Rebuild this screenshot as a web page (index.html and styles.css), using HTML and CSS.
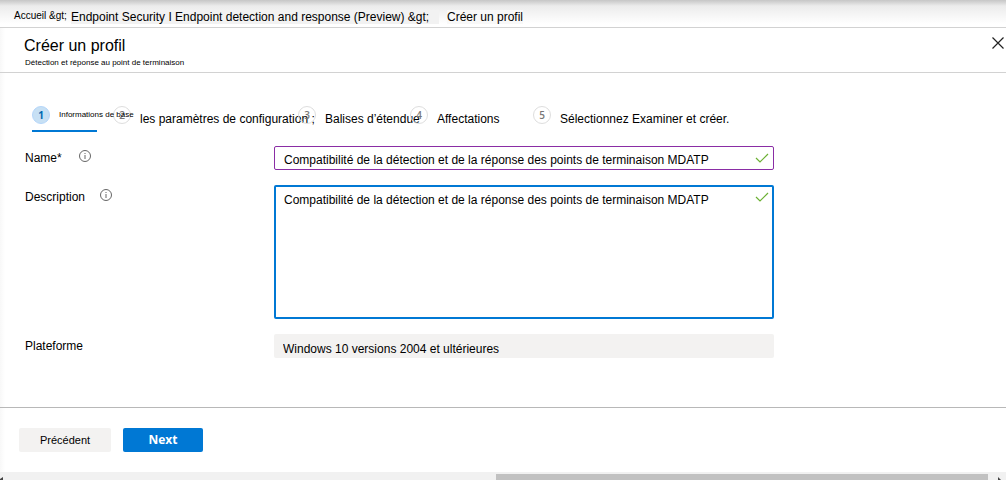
FILE: index.html
```html
<!DOCTYPE html>
<html lang="fr">
<head>
<meta charset="utf-8">
<title>Créer un profil</title>
<link rel="stylesheet" href="styles.css">
</head>
<body>
<div class="page">
  <nav class="breadcrumb" aria-label="Fil d'Ariane">
    <a class="crumb crumb-home" href="#">Accueil &amp;gt;</a>
    <a class="crumb crumb-section" href="#">Endpoint Security I Endpoint detection and response (Preview) &amp;gt;</a>
    <span class="crumb crumb-current">Créer un profil</span>
  </nav>
  <header class="blade-header">
    <div>
      <h1 class="title">Créer un profil</h1>
      <p class="subtitle">Détection et réponse au point de terminaison</p>
    </div>
    <button class="close" type="button" aria-label="Fermer">
      <svg width="12" height="12" viewBox="0 0 12 12"><path d="M.5.5l11 11M11.5.5l-11 11" stroke="#222" stroke-width="1.2" fill="none"/></svg>
    </button>
  </header>
  <main class="content">
    <ol class="steps">
      <li class="step step-basics"><span class="badge badge-active">1</span><span class="step-label label-small">Informations de base</span></li>
      <li class="step step-settings"><span class="badge">2</span><span class="step-label">les paramètres de configuration ;</span></li>
      <li class="step step-tags"><span class="badge">3</span><span class="step-label">Balises d’étendue</span></li>
      <li class="step step-assign"><span class="badge">4</span><span class="step-label">Affectations</span></li>
      <li class="step"><span class="badge">5</span><span class="step-label">Sélectionnez Examiner et créer.</span></li>
    </ol>
    <form class="form" id="profile">
      <div class="label-cell label-name">
        <label for="name">Name*</label>
        <svg class="info" width="12" height="12" viewBox="0 0 12 12"><circle cx="6" cy="6" r="5.5" fill="none" stroke="#666"/><path d="M6 5v4M6 3v1" stroke="#666"/></svg>
      </div>
      <div class="field">
        <input class="control name-input" id="name" type="text" value="Compatibilité de la détection et de la réponse des points de terminaison MDATP">
        <svg class="check" width="14" height="10" viewBox="0 0 14 10"><path d="M1 5l4 4L13 1" fill="none" stroke="#6bb033" stroke-width="1.2"/></svg>
      </div>
      <div class="label-cell label-description">
        <label for="description">Description</label>
        <svg class="info" width="12" height="12" viewBox="0 0 12 12"><circle cx="6" cy="6" r="5.5" fill="none" stroke="#666"/><path d="M6 5v4M6 3v1" stroke="#666"/></svg>
      </div>
      <div class="field">
        <textarea class="control description-input" id="description" spellcheck="false">Compatibilité de la détection et de la réponse des points de terminaison MDATP</textarea>
        <svg class="check" width="14" height="10" viewBox="0 0 14 10"><path d="M1 5l4 4L13 1" fill="none" stroke="#6bb033" stroke-width="1.2"/></svg>
      </div>
      <div class="label-cell"><label for="platform">Plateforme</label></div>
      <div class="field">
        <input class="control platform-input" id="platform" type="text" readonly value="Windows 10 versions 2004 et ultérieures">
      </div>
    </form>
  </main>
  <footer class="actions">
    <button class="button button-previous" type="button">Précédent</button>
    <button class="button button-next" type="submit" form="profile">Next</button>
  </footer>
  <div class="scrollbar" aria-hidden="true">
    <svg width="4" height="8" viewBox="0 0 4 8"><path d="M3 5v3H0V7z" fill="#444"/></svg>
    <div class="track"><div class="thumb"></div></div>
    <svg class="arrow-right" width="4" height="8" viewBox="0 0 4 8"><path d="M0 5l3 3H0z" fill="#444"/></svg>
  </div>
</div>
</body>
</html>
```
FILE: styles.css
```css
* {
  box-sizing: border-box;
}

body {
  margin: 0;
  color: #000;
  background: #fff;
  font-family: "Liberation Sans", Arial, sans-serif;
  font-size: 12px;
  line-height: 14px;
}

.page {
  display: flex;
  flex-direction: column;
  min-height: 100vh;
  overflow: hidden;
  background: linear-gradient(to right, #f8f8f8, #fff 5px);
}

.breadcrumb {
  display: flex;
  align-items: flex-start;
  height: 28px;
  padding: 10px 0 0 14px;
  border-bottom: 1px solid #d2d2d2;
  background: linear-gradient(#c6c6c6, #ececec 6px, #fff 24px);
  white-space: nowrap;
}

.crumb {
  color: #000;
  text-decoration: none;
}

.crumb-home {
  width: 57px;
  font-size: 10px;
  line-height: 12px;
}

.crumb-section {
  width: 368px;
  background: #f2f2f2;
}

.crumb-current {
  margin-left: 8px;
  background: #f8f8f8;
}

.blade-header {
  display: flex;
  justify-content: space-between;
  height: 45px;
  padding: 8px 2px 0 24px;
  border-bottom: 1px solid #d2d2d2;
}

.title {
  margin: 0;
  font-size: 16px;
  font-weight: 400;
  line-height: 20px;
}

.subtitle {
  margin: 0;
  padding-left: 1px;
  font-size: 8px;
  line-height: 14px;
}

.close {
  align-self: flex-start;
  margin-top: 1px;
  padding: 0;
  border: 0;
  background: none;
}

.close svg,
.info,
.check {
  display: block;
}

.content {
  flex: 1 0 auto;
  padding: 33px 24px 49px 25px;
}

.steps {
  display: flex;
  margin: 0;
  padding: 0 0 0 7px;
  list-style: none;
  white-space: nowrap;
}

.step {
  display: flex;
  gap: 9px;
  height: 26px;
}

.step-basics {
  position: relative;
  width: 81px;
}

.step-basics::after {
  position: absolute;
  bottom: 0;
  left: 0;
  width: 65px;
  height: 2px;
  background: #0078d4;
  content: "";
}

.step-settings {
  width: 185px;
}

.step-tags {
  width: 112px;
}

.step-assign {
  width: 123px;
}

.badge {
  flex: none;
  width: 18px;
  height: 18px;
  border: 1px solid #dedede;
  border-radius: 50%;
  color: #777;
  font-family: "Open Sans", sans-serif;
  font-size: 10px;
  font-weight: 600;
  line-height: 16px;
  text-align: center;
}

.badge-active {
  border-color: #b5d6fa;
  color: #0067b0;
  background: #c7e0f4;
  font-weight: 700;
}

.step-label {
  padding-top: 6px;
}

.label-small {
  padding-top: 2px;
  font-size: 8px;
}

.form {
  display: grid;
  grid-template-columns: 249px minmax(0, 500px);
  row-gap: 15px;
  margin-top: 14px;
}

.label-cell {
  display: flex;
  align-items: flex-start;
  padding-top: 5px;
}

.label-name {
  gap: 17px;
}

.label-description {
  gap: 15px;
}

.info {
  margin-top: -1px;
}

.field {
  position: relative;
}

.control {
  display: block;
  width: 100%;
  margin: 0;
  border-radius: 2px;
  outline: 0;
  color: #000;
  background: #fff;
  font: inherit;
}

.name-input {
  height: 24px;
  padding: 4px 24px 0 9px;
  border: 1px solid #8a2da5;
}

.description-input {
  height: 134px;
  padding: 6px 24px 6px 8px;
  border: 2px solid #0078d4;
  resize: none;
}

.platform-input {
  height: 24px;
  padding: 5px 9px 0;
  border: 0;
  background: #f3f2f1;
}

.check {
  position: absolute;
  top: 7px;
  right: 5px;
}

.actions {
  display: flex;
  gap: 12px;
  padding: 20px 19px;
  border-top: 1px solid #b8b8b8;
}

.button {
  height: 24px;
  padding: 0;
  border: 0;
  border-radius: 2px;
  font: inherit;
}

.button-previous {
  width: 92px;
  color: #000;
  background: #f3f2f1;
  font-size: 11px;
}

.button-next {
  width: 80px;
  color: #fff;
  background: #0078d4;
  font-family: "Open Sans", sans-serif;
  font-weight: 700;
}

.scrollbar {
  display: flex;
  height: 8px;
  background: #f1f1f1;
}

.track {
  flex: 1;
  padding: 2px 10px 0 0;
}

.thumb {
  width: 50%;
  height: 6px;
  margin-left: auto;
  background: #c1c1c1;
}

.arrow-right {
  margin-right: 4px;
}
```
